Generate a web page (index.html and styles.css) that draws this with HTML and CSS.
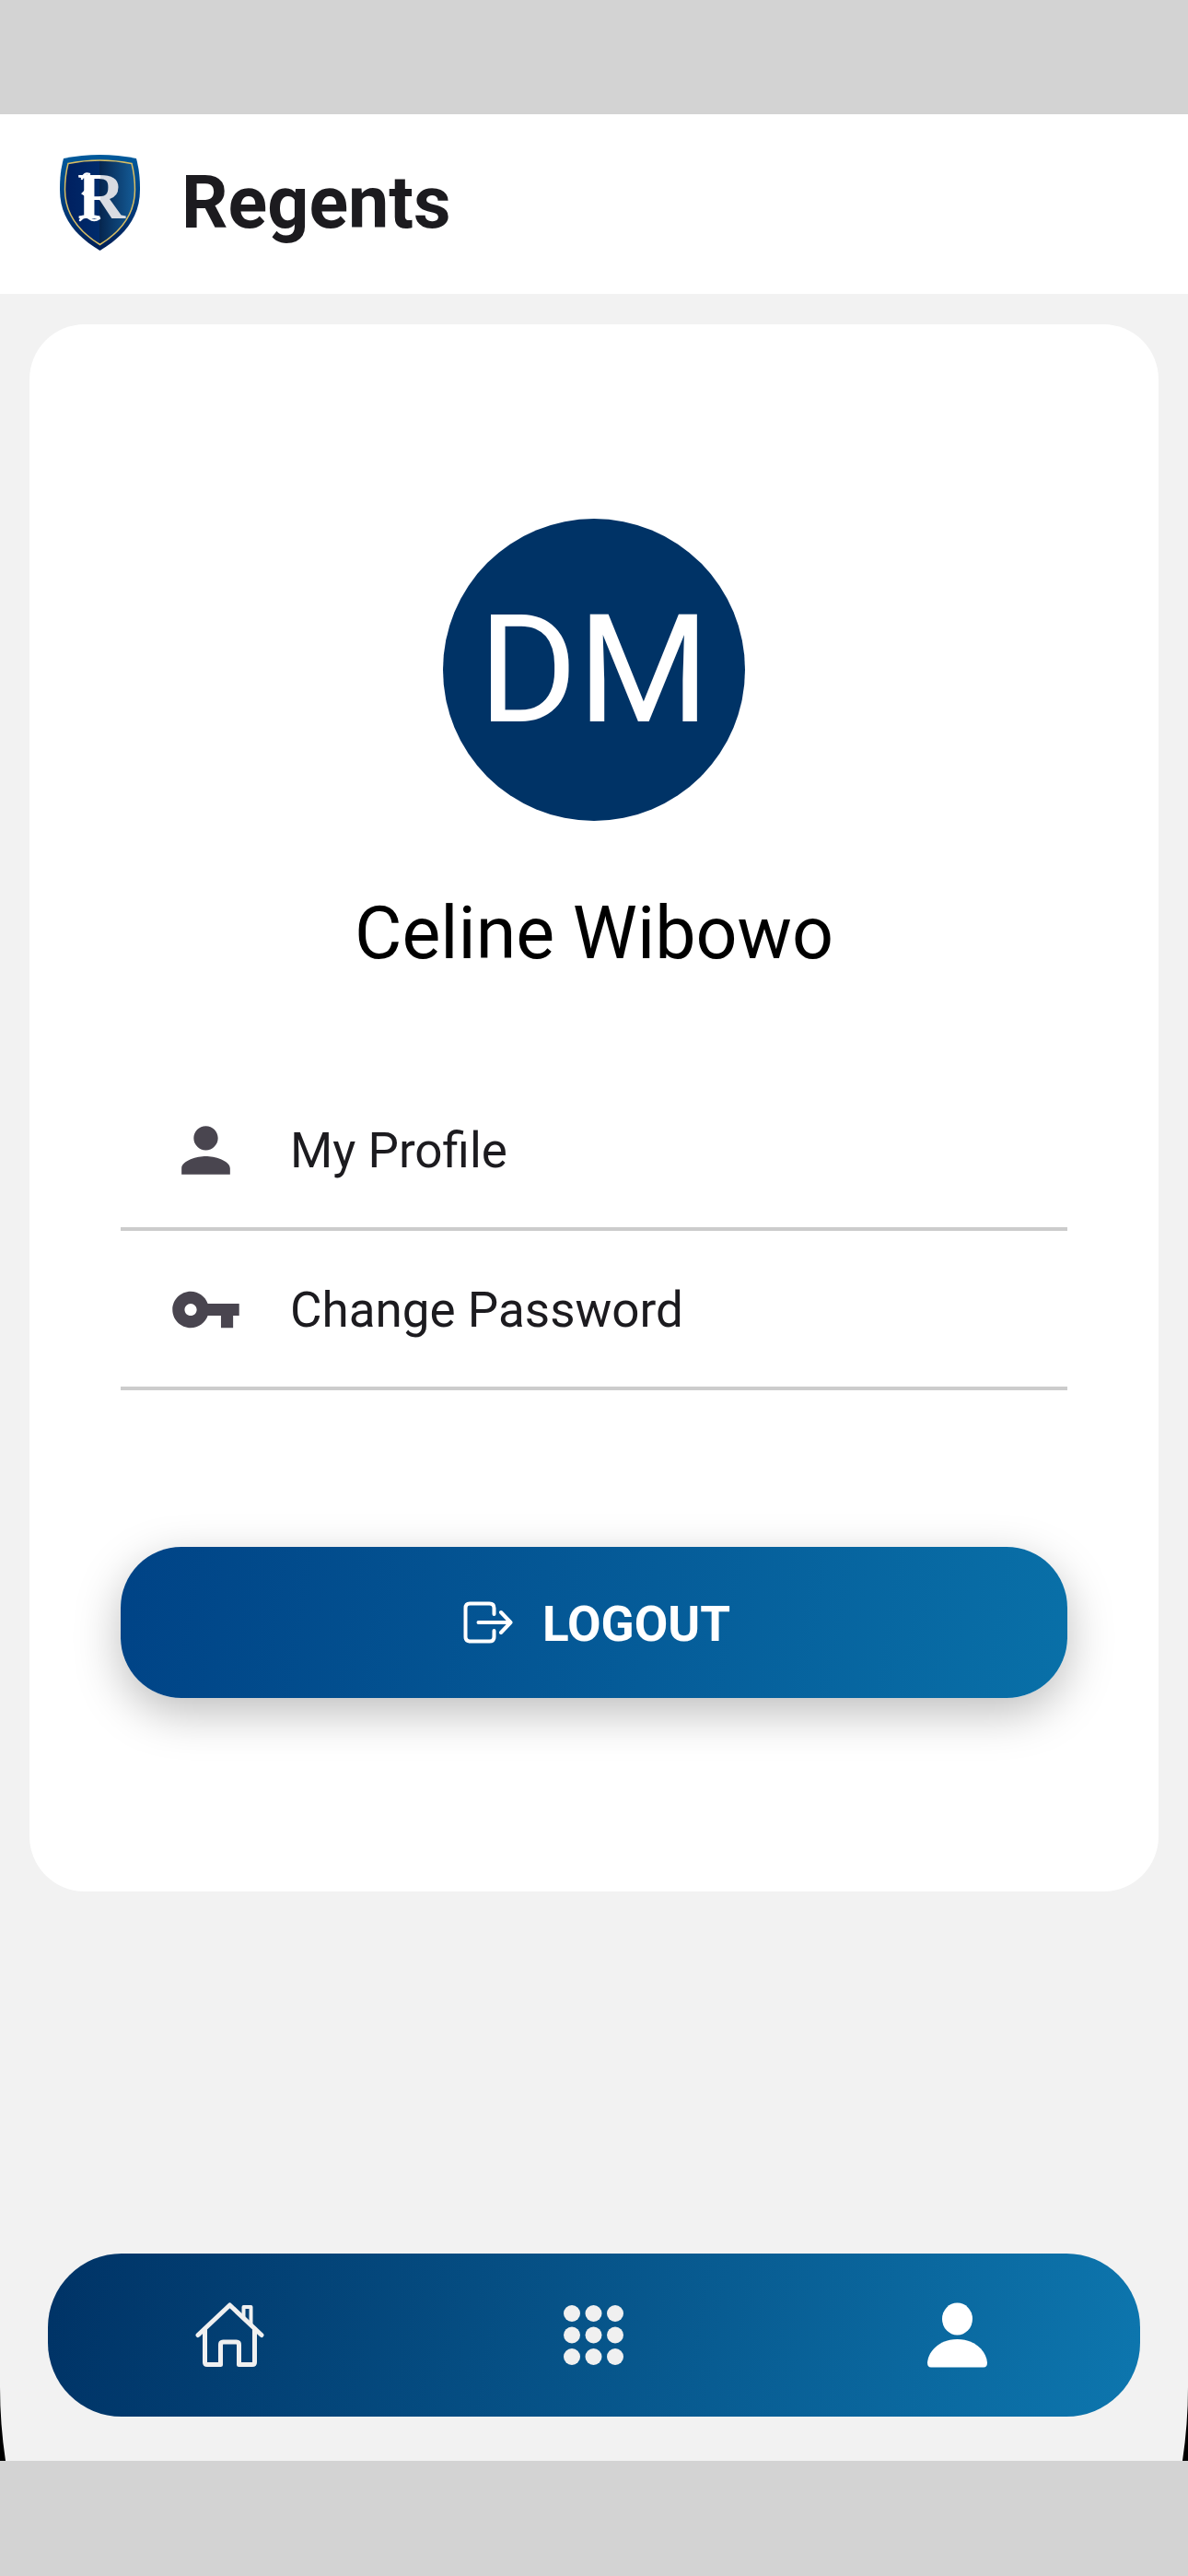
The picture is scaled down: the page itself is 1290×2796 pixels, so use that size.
FILE: index.html
```
<!DOCTYPE html>
<html lang="en">
<head>
    <meta charset="UTF-8">
    <meta name="viewport" content="width=device-width, initial-scale=1.0">
    <title>Regents</title>
    <link rel="stylesheet" href="styles.css">
</head>
<body>
    <div class="screen">
        <header class="app-header">
            <svg class="logo" viewBox="0 0 87 104" aria-hidden="true">
                <defs>
                    <linearGradient id="rim" x1="0" y1="0" x2="0" y2="1">
                        <stop offset="0" stop-color="#005a9c"/>
                        <stop offset="0.6" stop-color="#003878"/>
                        <stop offset="1" stop-color="#001f56"/>
                    </linearGradient>
                    <linearGradient id="field" x1="0" y1="0" x2="1" y2="0">
                        <stop offset="0" stop-color="#002060"/>
                        <stop offset="0.5" stop-color="#002b6b"/>
                        <stop offset="0.5" stop-color="#06264f"/>
                        <stop offset="1" stop-color="#145c98"/>
                    </linearGradient>
                    <linearGradient id="letter" x1="0" y1="0" x2="1" y2="0">
                        <stop offset="0.48" stop-color="#ffffff"/>
                        <stop offset="0.48" stop-color="#d9dce2"/>
                    </linearGradient>
                </defs>
                <path fill="url(#rim)" d="M4 4Q24 0 43.5 0T83 4C86 16 87 24 87 38C87 68 70 88 43.5 104C17 88 0 68 0 38C0 24 1 16 4 4Z"/>
                <path fill="url(#field)" stroke="#d9bd62" stroke-width="1.5" d="M9 9.5Q26 6 43.5 6T78 9.5C80.5 19 81.5 27 81.5 38C81.5 64 67 83 43.5 97.5C20 83 5.5 64 5.5 38C5.5 27 6.5 19 9 9.5Z"/>
                <text class="logo-letter" x="45" y="69" text-anchor="middle" fill="url(#letter)">R</text>
                <!-- flourishes round the letter -->
                <g fill="none" stroke="#ffffff" stroke-width="2.5" stroke-linecap="round">
                    <path d="M24 26Q26 19 32 21"/>
                    <path d="M31 36L25 42L31 46"/>
                    <path d="M22 71Q27 65 32 69T43 69"/>
                </g>
            </svg>
            <h1>Regents</h1>
        </header>

        <main class="card">
            <div class="avatar">DM</div>
            <h2 class="user-name">Celine Wibowo</h2>

            <ul class="menu">
                <li>
                    <a href="#">
                        <svg class="menu-icon" viewBox="0 0 24 24" aria-hidden="true">
                            <path d="M12 12c2.210 0 4-1.790 4-4s-1.790-4-4-4-4 1.790-4 4 1.790 4 4 4zm0 2c-2.670 0-8 1.340-8 4v2h16v-2c0-2.660-5.330-4-8-4z"/>
                        </svg>
                        My Profile
                    </a>
                </li>
                <li>
                    <a href="#">
                        <svg class="menu-icon" viewBox="0 0 24 24" aria-hidden="true">
                            <path d="M12.650 10C11.830 7.670 9.610 6 7 6c-3.310 0-6 2.690-6 6s2.690 6 6 6c2.610 0 4.830-1.670 5.650-4H17v4h4v-4h2v-4H12.650zM7 14c-1.100 0-2-.9-2-2s.9-2 2-2 2 .9 2 2-.9 2-2 2z"/>
                        </svg>
                        Change Password
                    </a>
                </li>
            </ul>

            <button type="button" class="logout-btn">
                <svg class="logout-icon" viewBox="-6 0 60 50" aria-hidden="true">
                    <path d="M33.5 14V7.5Q33.5 2.5 28.5 2.5H7.5Q2.5 2.5 2.5 7.5V38.5Q2.5 43.5 7.5 43.5H28.5Q33.5 43.5 33.5 38.5V32"/>
                    <path d="M16.5 23H51.5M41 12L51.5 23L41 34"/>
                </svg>
                LOGOUT
            </button>
        </main>

        <nav class="bottom-nav">
            <a href="#" aria-label="Home">
                <svg class="nav-icon" viewBox="0 0 75 71" aria-hidden="true">
                    <g fill="none" stroke="#f0f0f0" stroke-width="5" stroke-linecap="round" stroke-linejoin="round">
                        <path d="M3 35.5L37.5 3L72 35.5"/>
                        <path d="M10.5 29V65Q10.5 67.5 13 67.5H27.5V46Q27.5 43 30.5 43H44.5Q47.5 43 47.5 46V67.5H62Q64.5 67.5 64.5 65V29"/>
                        <path stroke-width="4" d="M52.5 17V5H60.5V24"/>
                    </g>
                </svg>
            </a>
            <a href="#" aria-label="Apps">
                <svg class="nav-icon" viewBox="0 0 75 71" aria-hidden="true">
                    <g fill="#f0f0f0">
                        <circle cx="14" cy="12" r="9"/>
                        <circle cx="37.5" cy="12" r="9"/>
                        <circle cx="61" cy="12" r="9"/>
                        <circle cx="14" cy="35.5" r="9"/>
                        <circle cx="37.5" cy="35.5" r="9"/>
                        <circle cx="61" cy="35.5" r="9"/>
                        <circle cx="14" cy="59" r="9"/>
                        <circle cx="37.5" cy="59" r="9"/>
                        <circle cx="61" cy="59" r="9"/>
                    </g>
                </svg>
            </a>
            <a href="#" aria-label="Profile" aria-current="page">
                <svg class="nav-icon" viewBox="0 0 75 71" aria-hidden="true">
                    <g fill="#ffffff">
                        <ellipse cx="36.5" cy="18" rx="16.5" ry="17.5"/>
                        <path d="M8 70.5Q4 70.5 4 65.5C5 52 18 40 36.5 40S68 52 69 65.5Q69 70.5 65 70.5Z"/>
                    </g>
                </svg>
            </a>
        </nav>

        <!-- device corners -->
        <svg class="corner corner-left" viewBox="0 0 6 80" aria-hidden="true">
            <path d="M0 0Q0 40 6 80H0Z"/>
        </svg>
        <svg class="corner corner-right" viewBox="0 0 6 80" aria-hidden="true">
            <path d="M6 0Q6 40 0 80H6Z"/>
        </svg>
    </div>
</body>
</html>
```
FILE: styles.css
```
* {
    margin: 0;
    padding: 0;
    box-sizing: border-box;
}

body {
    font-family: Roboto, "Liberation Sans", sans-serif;
    background-color: #d3d3d3;
    color: #1c1b1f;
    display: flex;
    flex-direction: column;
    min-height: 100vh;
    padding: 124px 0 125px;
}

.screen {
    position: relative;
    flex: 1;
    display: flex;
    flex-direction: column;
    background-color: #f2f2f2;
}

.app-header {
    display: flex;
    align-items: center;
    gap: 45px;
    height: 195px;
    padding: 0 65px 3px;
    background-color: #ffffff;
}

.app-header h1 {
    font-size: 79px;
    line-height: 92px;
    font-weight: bold;
}

.logo {
    width: 87px;
    height: 104px;
}

.logo-letter {
    font-family: "Liberation Serif", serif;
    font-size: 72px;
    font-weight: bold;
}

.card {
    display: flex;
    flex-direction: column;
    align-items: center;
    margin: 33px 32px;
    padding: 211px 99px 210px;
    background-color: #ffffff;
    border-radius: 60px;
}

.avatar {
    display: flex;
    align-items: center;
    justify-content: center;
    width: 328px;
    height: 328px;
    border-radius: 50%;
    background-color: #003366;
    color: #ffffff;
    font-size: 164px;
    line-height: 192px;
}

.user-name {
    margin-top: 76px;
    color: #000000;
    font-size: 79px;
    line-height: 92px;
    font-weight: normal;
}

.menu {
    width: 100%;
    margin-top: 104px;
    list-style: none;
}

.menu a {
    display: flex;
    align-items: center;
    gap: 52px;
    height: 173px;
    padding: 2px 53px 0;
    border-bottom: 4px solid #cccccc;
    color: #1c1b1f;
    font-size: 53px;
    text-decoration: none;
}

.menu-icon {
    width: 79px;
    height: 79px;
    fill: #49454f;
}

.logout-btn {
    display: flex;
    align-items: center;
    justify-content: center;
    gap: 32px;
    width: 100%;
    height: 164px;
    margin-top: 170px;
    padding-top: 4px;
    border: none;
    border-radius: 66px;
    background: linear-gradient(99deg, #004386, #0970a8);
    box-shadow: 0 16px 50px rgba(0, 0, 0, 0.26);
    color: #ffffff;
    font-family: inherit;
    font-size: 53px;
    font-weight: bold;
    cursor: pointer;
}

.logout-icon {
    width: 60px;
    height: 50px;
    fill: none;
    stroke: #ffffff;
    stroke-width: 4;
    stroke-linecap: round;
    stroke-linejoin: round;
}

.bottom-nav {
    display: flex;
    align-items: center;
    height: 177px;
    margin: auto 52px 48px;
    border-radius: 80px;
    background: linear-gradient(99deg, #003366, #0d76ae);
}

.bottom-nav a {
    flex: 1;
    display: flex;
    justify-content: center;
}

.nav-icon {
    width: 75px;
    height: 71px;
}

.corner {
    position: absolute;
    bottom: 0;
    width: 6px;
    height: 80px;
}

.corner-left {
    left: 0;
}

.corner-right {
    right: 0;
}
```
